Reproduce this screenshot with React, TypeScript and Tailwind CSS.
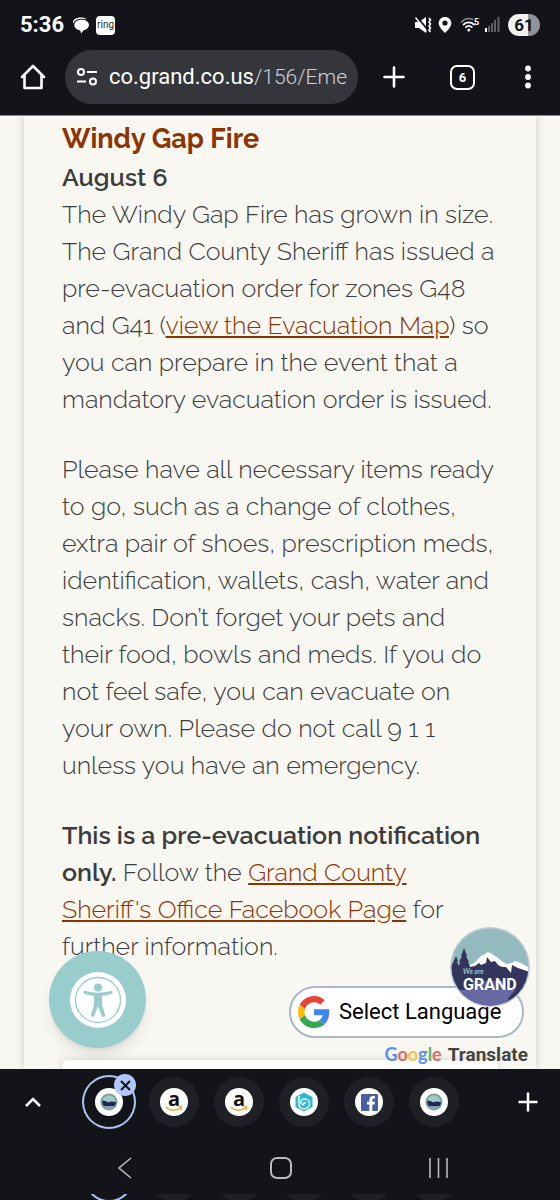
import React, { useState } from 'react';
import { FaFacebookF } from 'react-icons/fa';

interface Tab {
  id: number;
  title: string;
  icon: 'county' | 'amazon' | 'bing' | 'facebook';
}

const TABS: Tab[] = [
  { id: 1, title: 'Grand County', icon: 'county' },
  { id: 2, title: 'Amazon', icon: 'amazon' },
  { id: 3, title: 'Amazon', icon: 'amazon' },
  { id: 4, title: 'Bing', icon: 'bing' },
  { id: 5, title: 'Facebook', icon: 'facebook' },
  { id: 6, title: 'Grand County', icon: 'county' },
];

function StatusBar() {
  return (
    <div className="flex h-[50px] items-center px-5 text-white">
      <span className="text-[22px] leading-none font-bold">5:36</span>
      <svg className="ml-2 h-[17px] w-[17px]" viewBox="0 0 16 16" fill="currentColor">
        <path d="M1 6.2C.2 2.8 3.5.5 8.5.5c2.500 0 4.200.6 5.300 1.600C12 1.500 9.800 1.400 8 1.700 4.500 2.200 2.200 3.700 1 6.200z" />
        <path d="M9 2.500c4 0 7 1.900 7 5 0 2.500-2 4.300-5 4.900L8.600 15.600 7.700 12.600C4.600 12.200 2.200 10.400 2.200 7.600c0-3 3-5.100 6.800-5.100z" />
      </svg>
      <span className="ml-[7px] flex h-[19px] w-[19px] items-center justify-center rounded-[4px] bg-white text-[10px] leading-none text-[#24262b]">
        ring
      </span>

      <div className="ml-auto flex items-center">
        {/* muted, vibrate */}
        <svg className="h-[18px] w-[18px]" viewBox="0 0 18 18" fill="none">
          <path d="M1 6h4l7-5v16l-7-5H1z" fill="#fff" />
          <path d="M2.500 0l12 15" stroke="#121419" strokeWidth="1.800" />
          <path d="M1.500 1.500l11 14" stroke="#fff" strokeWidth="1.400" />
          <path d="M15 2l1.500 2L15 6l1.500 2L15 10l1.500 2L15 14l1.500 2" stroke="#fff" strokeWidth="1.600" />
        </svg>
        <svg className="ml-[6px] h-[18px] w-[14px]" viewBox="0 0 14 18">
          <path d="M7 1C3.500 1 .7 3.700.7 7.200.7 11.500 7 17 7 17s6.300-5.500 6.300-9.800C13.300 3.700 10.500 1 7 1z" fill="#fff" />
          <circle cx="7" cy="7" r="2.600" fill="#121419" />
        </svg>
        <svg className="ml-2 h-[18px] w-5" viewBox="0 0 20 18" fill="none" strokeLinecap="round">
          <path d="M1.500 6C4.500 2.600 9 1.900 12.500 3.400" stroke="#8b8d92" strokeWidth="1.600" />
          <path d="M3.500 8.600c3-3 7.500-3 10.500 0M5.800 11.200c2-1.700 4-1.700 6 0" stroke="#fff" strokeWidth="1.700" />
          <circle cx="8.800" cy="14" r="1.500" fill="#fff" />
          <text x="14" y="9" fontSize="9" fontWeight="700" fill="#fff">5</text>
        </svg>
        <svg className="ml-[4px] h-[18px] w-4" viewBox="0 0 16 18">
          <rect x="1" y="12" width="2" height="4" fill="#fff" />
          <path d="M4 10h2v6H4zM7 7h2v9H7zM10 4h2v12h-2zM13.500 1h2v15h-2z" fill="#5f6166" />
        </svg>
        <span className="ml-2 flex h-[22px] w-8 items-center justify-center rounded-full bg-linear-to-r from-[#f1f1f2] from-61% to-[#929396] to-61% text-[17px] leading-none font-bold text-[#121419]">
          61
        </span>
      </div>
    </div>
  );
}

function AddressBar() {
  return (
    <div className="flex items-center pb-[11px] pl-5 pr-[29px] text-white">
      <button aria-label="Home">
        <svg className="h-[26px] w-[26px]" viewBox="0 0 26 26" fill="none" stroke="currentColor" strokeWidth="2.600" strokeLinejoin="round" strokeLinecap="round">
          <path d="M2 13L13 2l11 11M4.500 11v13h17V11" />
        </svg>
      </button>
      <div className="ml-[19px] flex h-[54px] min-w-0 flex-1 items-center rounded-full bg-[#34363b] pl-[11px] pr-1">
        <svg className="h-5 w-[22px] shrink-0" viewBox="0 0 22 20" fill="none" stroke="currentColor" strokeWidth="2">
          <circle cx="5" cy="5" r="3" />
          <path d="M11 5h10M1 14.500h9" />
          <circle cx="17" cy="14.500" r="3" />
        </svg>
        <span className="ml-[11px] text-[22px] leading-8 whitespace-nowrap">
          co.grand.co.us<span className="text-[21px] font-light text-[#d0d1dc]">/156/Eme</span>
        </span>
      </div>
      <button aria-label="New tab" className="ml-[25px]">
        <svg className="h-[22px] w-[22px]" viewBox="0 0 22 22" stroke="currentColor" strokeWidth="2.600" strokeLinecap="round">
          <path d="M11 1.500v19M1.500 11h19" />
        </svg>
      </button>
      <button aria-label="Switch tabs" className="ml-[45px] flex h-[25px] w-[25px] items-center justify-center rounded-[7px] border-2 border-white text-[13px] leading-none font-bold">
        6
      </button>
      <button aria-label="More options" className="ml-[50px]">
        <svg className="h-6 w-[6px]" viewBox="0 0 6 24" fill="currentColor">
          <circle cx="3" cy="3.500" r="2.900" />
          <circle cx="3" cy="12" r="2.900" />
          <circle cx="3" cy="20.500" r="2.900" />
        </svg>
      </button>
    </div>
  );
}

function Article() {
  return (
    <article className="space-y-[33px] font-['Raleway','Lato',sans-serif] text-[25px] leading-[37px] font-light text-[#3c3c3c]">
      <div>
        <h1 className="text-[27px] leading-[41px] font-bold text-[#8d3400]">Windy Gap Fire</h1>
        <h2 className="font-semibold">August 6</h2>
        <p>
          The Windy Gap Fire has grown in size. The Grand County Sheriff has issued a
          pre-evacuation order for zones G48 and G41 (<a href="#map" className="text-[#8d3400] underline">view the Evacuation Map</a>)
          so you can prepare in the event that a mandatory evacuation order is issued.
        </p>
      </div>
      <p>
        Please have all necessary items ready to go, such as a change of clothes, extra pair of
        shoes, prescription meds, identification, wallets, cash, water and snacks. Don’t forget
        your pets and their food, bowls and meds. If you do not feel safe, you can evacuate on
        your own. Please do not call 9 1 1 unless you have an emergency.
      </p>
      <p>
        <strong className="font-semibold">This is a pre-evacuation notification only.</strong> Follow the{' '}
        <a href="#facebook" className="text-[#8d3400] underline">Grand County Sheriff's Office Facebook Page</a> for
        further information.
      </p>
    </article>
  );
}

function GoogleLogo() {
  return (
    <svg className="h-8 w-8 shrink-0" viewBox="0 0 48 48">
      <path fill="#EA4335" d="M24 9.500c3.540 0 6.710 1.220 9.210 3.600l6.850-6.850C35.900 2.380 30.470 0 24 0 14.620 0 6.510 5.380 2.560 13.220l7.980 6.190C12.430 13.720 17.740 9.500 24 9.500z" />
      <path fill="#4285F4" d="M46.980 24.550c0-1.570-.15-3.090-.38-4.550H24v9.020h12.940c-.58 2.960-2.260 5.480-4.780 7.180l7.730 6c4.510-4.180 7.090-10.360 7.090-17.650z" />
      <path fill="#FBBC05" d="M10.530 28.590c-.48-1.450-.76-2.990-.76-4.590s.27-3.140.76-4.590l-7.980-6.190C.92 16.460 0 20.120 0 24c0 3.880.92 7.540 2.560 10.780l7.970-6.190z" />
      <path fill="#34A853" d="M24 48c6.480 0 11.930-2.130 15.890-5.810l-7.730-6c-2.150 1.450-4.920 2.300-8.160 2.300-6.260 0-11.570-4.220-13.470-9.910l-7.980 6.190C6.510 42.620 14.620 48 24 48z" />
    </svg>
  );
}

function TranslateWidget() {
  return (
    <div className="absolute right-8 bottom-[2px] flex flex-col items-end">
      <button className="mr-1 flex h-[52px] w-[235px] items-center rounded-full border-2 border-[#a9b7c6] bg-white pl-[7px] text-black">
        <GoogleLogo />
        <span className="ml-[9px] text-[22px] leading-none">Select Language</span>
      </button>
      <p className="mt-1 flex items-baseline text-[19px] leading-[25px] font-bold text-[#444]">
        <span className="mr-[6px] font-['Lato',sans-serif] text-[18px]">
          <span className="text-[#5d8ff0]">G</span>
          <span className="text-[#e8695c]">o</span>
          <span className="text-[#f6c34c]">o</span>
          <span className="text-[#5d8ff0]">g</span>
          <span className="text-[#58b374]">l</span>
          <span className="text-[#e8695c]">e</span>
        </span>
        Translate
      </p>
    </div>
  );
}

function GrandBadge() {
  return (
    <button aria-label="We are Grand" className="absolute right-[30px] bottom-[62px]">
      <svg className="h-20 w-20" viewBox="0 0 80 80">
        <defs>
          <clipPath id="badge">
            <circle cx="40" cy="40" r="38.500" />
          </clipPath>
        </defs>
        <circle cx="40" cy="40" r="40" fill="#c3cad3" />
        <g clipPath="url(#badge)">
          <path fill="#93babf" d="M0 0h80v80H0z" />
          <path fill="#fff" d="M18 39l6-3 7-7 4-2 3-2 4 2 6 4 5 4 4 2 5-1 3-2 6 2 9 5v12H18z" />
          <path fill="#33355c" d="M0 41l20-1 5-1 4-3 2 2 5-2 1-6 4 5 4-1 3 4 4 2 4 0 5 6 1-8 6 3 12 4v35H0z" />
          <path fill="#33355c" d="M0 42l2-5 1-1 3-7 2 5-1 1 3 6zM8 42l2-7-1 0 3-6-1 0 3-8 3 8-1 0 3 6-1 0 3 7z" />
          <path fill="#555889" d="M22 54h34v9H22z" />
          <path fill="#676aa2" d="M0 63h66l-8 8 3 9H0z" />
          <path fill="#33355c" d="M66 62l14-6v24H58l1-9z" />
        </g>
        <text x="13" y="47" fontSize="7" fontStyle="italic" fontWeight="700" fill="#9ec3cb" fontFamily="Lato, sans-serif">We are</text>
        <text x="13" y="63" fontSize="16" fontWeight="700" fill="#fff" fontFamily="Roboto, sans-serif">GRAND</text>
      </svg>
    </button>
  );
}

function AccessibilityButton() {
  return (
    <button aria-label="Accessibility options" className="absolute bottom-[21px] left-[49px] flex h-[97px] w-[97px] items-center justify-center rounded-full bg-[#99cccc] shadow-lg">
      <svg className="h-14 w-14" viewBox="0 0 56 56">
        <circle cx="28" cy="28" r="28" fill="#fff" />
        <circle cx="28" cy="28" r="22.500" fill="none" stroke="#99cccc" strokeWidth="1.300" />
        <circle cx="28" cy="15.500" r="4" fill="#99cccc" />
        <path d="M15 20.500c8 2.200 18 2.200 26 0" fill="none" stroke="#99cccc" strokeWidth="3.200" strokeLinecap="round" />
        <path d="M24 21h8v12l3 9.500a1.700 1.700 0 0 1-3.300 1.200L28.300 35h-.6l-3.400 8.700A1.700 1.700 0 0 1 21 42.500L24 33z" fill="#99cccc" />
      </svg>
    </button>
  );
}

function TabIcon({ icon }: { icon: Tab['icon'] }) {
  if (icon === 'amazon') {
    return (
      <svg className="h-7 w-7" viewBox="0 0 28 28">
        <text x="14" y="18" textAnchor="middle" fontSize="20" fontWeight="700" fill="#111" fontFamily="'Open Sans', sans-serif">a</text>
        <path d="M6 19c4 4.200 11 4.200 15 .6" fill="none" stroke="#e9ae3a" strokeWidth="1.500" />
        <path d="M18.500 19l3.300-.6-.6 3.400" fill="none" stroke="#e9ae3a" strokeWidth="1.300" />
      </svg>
    );
  }
  if (icon === 'bing') {
    return (
      <svg className="h-5 w-5" viewBox="0 0 20 20">
        <path d="M10 .5l8.500 4.500v10L10 19.500 1.500 15V5z" fill="#2fb9cf" />
        <path d="M5 4v8.500c0 3 3 4.500 5.500 4.300 3.500-.3 5.500-3 5-5.800-.4-2.500-2.500-3.900-5-3.900-2.400 0-3.800 1.400-3.700 3.200.1 1.600 1.600 2.600 3.200 2.400" fill="none" stroke="#e5fbff" strokeWidth="1.500" />
        <circle cx="10.500" cy="11" r="1.300" fill="#fff" />
      </svg>
    );
  }
  if (icon === 'facebook') {
    return (
      <span className="flex h-[17px] w-[17px] items-end justify-end rounded-[1px] bg-[#4560a0] pr-[2px] text-white">
        <FaFacebookF className="h-[15px] w-[10px]" />
      </span>
    );
  }
  return (
    <svg className="h-[18px] w-[18px]" viewBox="0 0 18 18">
      <circle cx="9" cy="9" r="8.500" fill="#7e9f91" />
      <circle cx="9" cy="9" r="6.700" fill="#9fcbc6" />
      <path d="M2.300 7.500l3 .5 3 1.500 2.500-1 5 .5v1.500a6.700 6.700 0 0 1-1.600 2.800H4a6.700 6.700 0 0 1-1.700-3.800z" fill="#20265c" />
      <path d="M4 13.300h10a6.700 6.700 0 0 1-10 0z" fill="#7f9dab" />
    </svg>
  );
}

export default function App() {
  const [activeTab, setActiveTab] = useState(1);

  return (
    <div className="flex h-screen flex-col overflow-hidden bg-[#121419] font-['Roboto',sans-serif]">
      <header>
        <StatusBar />
        <AddressBar />
      </header>

      <main className="relative min-h-0 flex-1 overflow-hidden border-t border-[#8b8b8b] bg-[#f8f6f1]">
        <div className="mx-6 h-full bg-[#f8f7f2] px-[38px] pt-[2px] shadow-[0_0_8px_rgba(0,0,0,0.18)]">
          <Article />
          <div className="mt-[95px] h-10 rounded-md bg-white shadow-[0_0_8px_rgba(0,0,0,0.15)]" />
        </div>
        <AccessibilityButton />
        <TranslateWidget />
        <GrandBadge />
      </main>

      <footer className="text-white">
        <div className="flex h-[66px] items-center pr-[22px] pl-[25px]">
          <button aria-label="Show tab group">
            <svg className="h-4 w-4" viewBox="0 0 16 16" fill="none" stroke="currentColor" strokeWidth="2.600">
              <path d="M1 12l7-7 7 7" />
            </svg>
          </button>
          <div className="ml-[43px] flex gap-[15px]">
            {TABS.map((tab) => (
              <div key={tab.id} className="relative">
                <button
                  aria-label={tab.title}
                  onClick={() => setActiveTab(tab.id)}
                  className={`flex h-[50px] w-[50px] items-center justify-center rounded-full ${tab.id === activeTab ? 'ring-2 ring-[#b3c2f5] ring-offset-0' : 'bg-[#1e2025]'}`}
                >
                  <span className="flex h-7 w-7 items-center justify-center rounded-full bg-white">
                    <TabIcon icon={tab.icon} />
                  </span>
                </button>
                {tab.id === activeTab && (
                  <button aria-label="Close tab" className="absolute -top-[3px] -right-[2px] flex h-[22px] w-[22px] items-center justify-center rounded-full bg-[#b3c6fa] text-[#121419]">
                    <svg className="h-[11px] w-[11px]" viewBox="0 0 11 11" stroke="currentColor" strokeWidth="2">
                      <path d="M1 1l9 9M10 1l-9 9" />
                    </svg>
                  </button>
                )}
              </div>
            ))}
          </div>
          <button aria-label="New tab in group" className="ml-auto">
            <svg className="h-5 w-5" viewBox="0 0 20 20" stroke="currentColor" strokeWidth="2.500">
              <path d="M10 .5v19M.5 10h19" />
            </svg>
          </button>
        </div>

        <nav className="flex h-[59px] items-center justify-between pt-[7px] pr-[111px] pl-[117px] text-[#b9babd]">
          <button aria-label="Back">
            <svg className="h-[22px] w-4" viewBox="0 0 16 22" fill="none" stroke="currentColor" strokeWidth="1.600">
              <path d="M14 1L2 11l12 10" />
            </svg>
          </button>
          <button aria-label="Home screen" className="h-[22px] w-[22px] rounded-[7px] border-2 border-[#b9babd]" />
          <button aria-label="Recent apps">
            <svg className="h-[22px] w-[21px]" viewBox="0 0 21 22" stroke="currentColor" strokeWidth="1.600">
              <path d="M2 1v20M10.500 1v20M19 1v20" />
            </svg>
          </button>
        </nav>

        {/* sliver of the tab strip under the navigation bar */}
        <div className="flex h-[6px] items-end gap-[15px] overflow-hidden pl-[84px]">
          {TABS.map((tab) => (
            <span
              key={tab.id}
              className={`-mb-[2px] h-[50px] w-[50px] shrink-0 rounded-full ${tab.id === activeTab ? 'border-2 border-[#b3c2f5]' : 'bg-[#1e2025]'}`}
            />
          ))}
        </div>
      </footer>
    </div>
  );
}
